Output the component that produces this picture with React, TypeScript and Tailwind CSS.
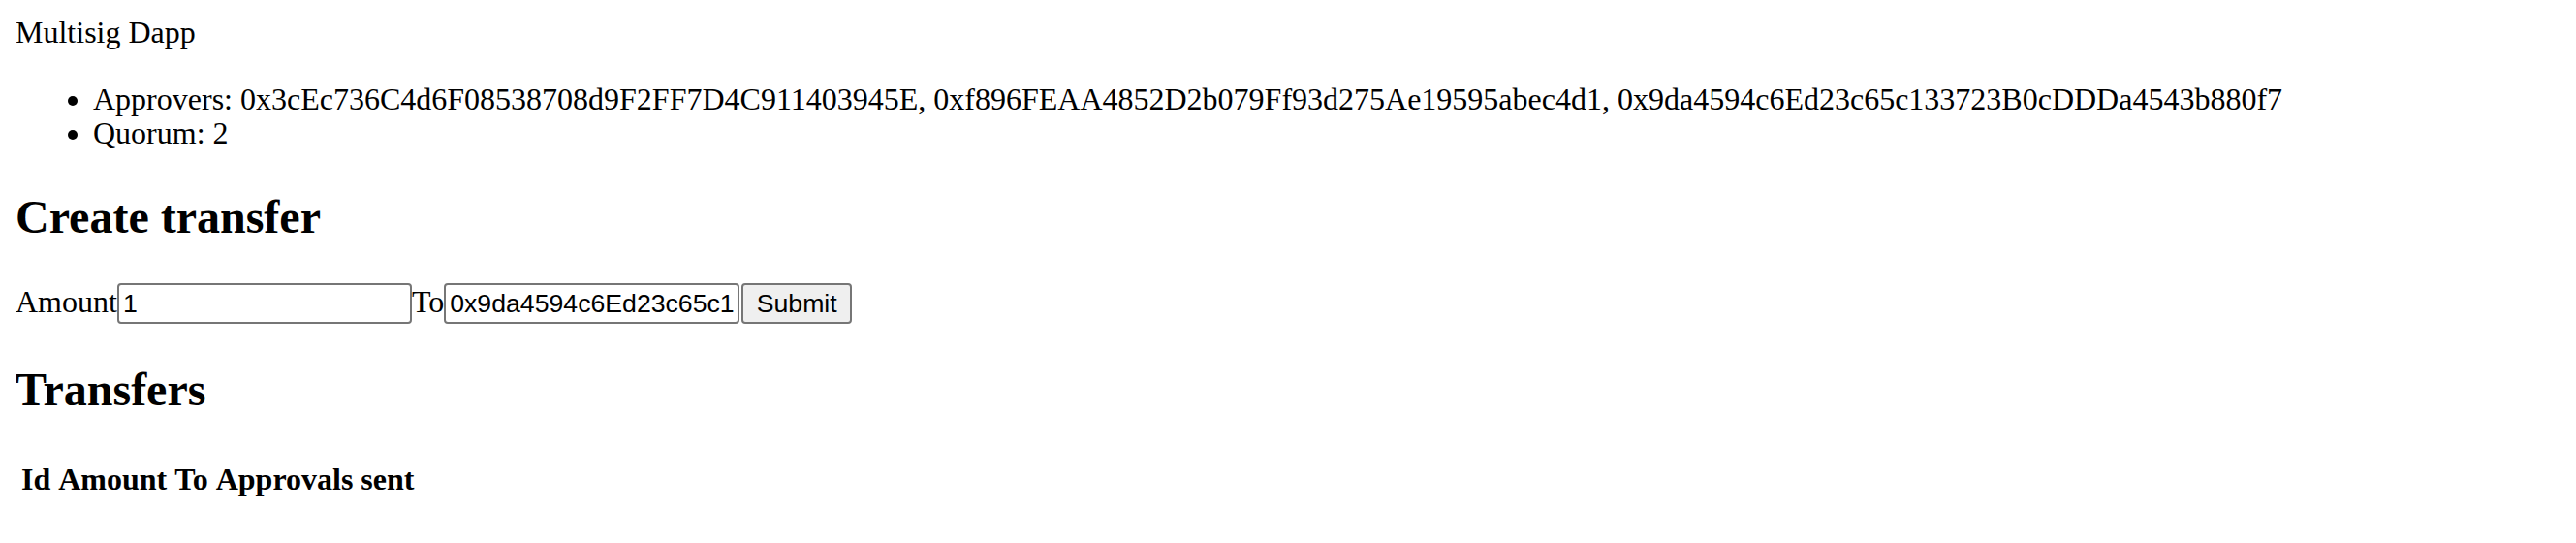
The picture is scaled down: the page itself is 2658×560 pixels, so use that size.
export default function App() {
  const approvers = [
    '0x3cEc736C4d6F08538708d9F2FF7D4C911403945E',
    '0xf896FEAA4852D2b079Ff93d275Ae19595abec4d1',
    '0x9da4594c6Ed23c65c133723B0cDDDa4543b880f7',
  ];

  return (
    <div className="min-h-screen bg-white p-4 font-['Liberation_Serif',serif] text-[32px] leading-[1.107] text-black">
      <div>Multisig Dapp</div>
      <ul className="mt-[33.5px] mb-[32px] list-disc pl-[80px]">
        <li>Approvers: {approvers.join(', ')}</li>
        <li>Quorum: 2</li>
      </ul>

      <h2 className="mt-[39.84px] mb-[41.5px] text-[48px] leading-[1.149] font-bold">Create transfer</h2>
      <form onSubmit={(e) => e.preventDefault()}>
        <label htmlFor="amount">Amount</label>
        <input
          id="amount"
          type="text"
          defaultValue="1"
          className="h-[42px] w-[304px] rounded-[4px] border-2 border-[#767676] bg-white px-[4px] py-[2px] font-['Liberation_Sans',Arial,sans-serif] text-[26.67px] leading-[normal] text-black"
        />
        <label htmlFor="to">To</label>
        <input
          id="to"
          type="text"
          defaultValue={approvers[2]}
          className="h-[42px] w-[305px] rounded-[4px] border-2 border-[#767676] bg-white px-[4px] py-[2px] font-['Liberation_Sans',Arial,sans-serif] text-[26.67px] leading-[normal] text-black"
        />
        <button
          type="submit"
          className="ml-[2px] h-[42px] w-[114px] rounded-[4px] border-2 border-[#767676] bg-[#efefef] px-[12px] py-[2px] font-['Liberation_Sans',Arial,sans-serif] text-[26.67px] leading-[normal] text-black"
        >
          Submit
        </button>
      </form>

      <h2 className="mt-[39.84px] mb-[41.5px] text-[48px] leading-[1.149] font-bold">Transfers</h2>
      <table className="border-separate border-spacing-[4px]">
        <thead>
          <tr>
            <th className="p-[2px] font-bold">Id</th>
            <th className="p-[2px] font-bold">Amount</th>
            <th className="p-[2px] font-bold">To</th>
            <th className="p-[2px] font-bold">Approvals sent</th>
          </tr>
        </thead>
        <tbody></tbody>
      </table>
    </div>
  );
}
